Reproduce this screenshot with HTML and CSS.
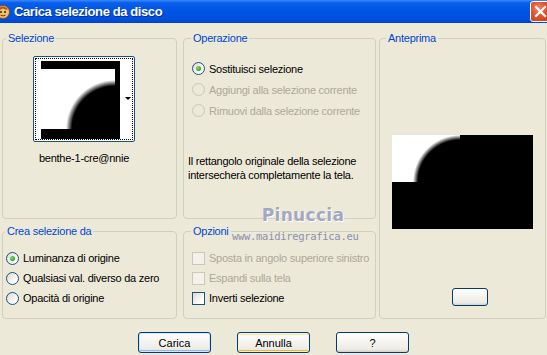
FILE: index.html
```html
<!DOCTYPE html>
<html>
<head>
	<meta charset="utf-8">
	<title>Carica selezione da disco</title>
	<link rel="stylesheet" href="styles.css">
</head>
<body>
	<div class="window">
		<div class="titlebar">
			<svg class="app-icon" width="16" height="16" viewBox="0 0 16 16">
				<circle cx="8" cy="8" r="6.5" fill="#f3c36a" stroke="#8a4b14" stroke-width="1"/>
				<path d="M3 5 Q8 0 13 5 L11 6 Q8 3 5 6 Z" fill="#b5561c"/>
				<circle cx="6" cy="8" r="1" fill="#3a2410"/>
				<circle cx="10" cy="8" r="1" fill="#3a2410"/>
				<path d="M5.5 11 Q8 13 10.5 11" stroke="#7a2c0c" stroke-width="1" fill="none"/>
			</svg>
			<span class="title">Carica selezione da disco</span>
			<span class="close">
				<svg width="21" height="21" viewBox="0 0 21 21">
					<path d="M6 6 L15 15 M15 6 L6 15" stroke="#fff" stroke-width="2.2" stroke-linecap="square"/>
				</svg>
			</span>
		</div>

		<div class="client">
			<div class="panels">
				<div class="col col-left">
					<fieldset class="group g-sel">
						<legend>Selezione</legend>
						<div class="group-body">
							<div class="thumb">
								<div class="thumb-focus">
									<div class="thumb-img">
										<div class="thumb-white"></div>
									</div>
									<div class="thumb-strip"><span class="arrow"></span></div>
								</div>
							</div>
							<div class="thumb-name">benthe-1-cre@nnie</div>
						</div>
					</fieldset>

					<fieldset class="group g-crea">
						<legend>Crea selezione da</legend>
						<div class="group-body">
							<div class="opt"><span class="radio checked"></span>Luminanza di origine</div>
							<div class="opt"><span class="radio"></span>Qualsiasi val. diverso da zero</div>
							<div class="opt"><span class="radio"></span>Opacità di origine</div>
						</div>
					</fieldset>
				</div>

				<div class="col col-mid">
					<fieldset class="group g-op">
						<legend>Operazione</legend>
						<div class="group-body">
							<div class="opt"><span class="radio checked"></span>Sostituisci selezione</div>
							<div class="opt disabled"><span class="radio"></span>Aggiungi alla selezione corrente</div>
							<div class="opt disabled"><span class="radio"></span>Rimuovi dalla selezione corrente</div>
							<p class="note">Il rettangolo originale della selezione intersecherà completamente la tela.</p>
						</div>
					</fieldset>

					<fieldset class="group g-opz">
						<legend>Opzioni</legend>
						<div class="group-body">
							<div class="opt disabled"><span class="check"></span>Sposta in angolo superiore sinistro</div>
							<div class="opt disabled"><span class="check"></span>Espandi sulla tela</div>
							<div class="opt"><span class="check"></span>Inverti selezione</div>
						</div>
					</fieldset>
				</div>

				<fieldset class="group g-ant">
					<legend>Anteprima</legend>
					<div class="group-body">
						<div class="preview">
							<div class="preview-white"></div>
						</div>
						<button class="btn btn-small" type="button"></button>
					</div>
				</fieldset>
			</div>

			<div class="actions">
				<button class="btn btn-focus" type="button">Carica</button>
				<button class="btn btn-default" type="button">Annulla</button>
				<button class="btn" type="button">?</button>
			</div>
		</div>

		<div class="watermark">
			<div class="wm-name">Pinuccia</div>
			<div class="wm-url">www.maidiregrafica.eu</div>
		</div>
	</div>
</body>
</html>
```

FILE: styles.css
```css
*{
	padding: 0;
	margin: 0;
	box-sizing: border-box;
}
body{
	width: 547px;
	height: 355px;
	overflow: hidden;
	background: #ECE9D8;
	font-family: "Liberation Sans", Arial, sans-serif;
	font-size: 11px;
	letter-spacing: -0.25px;
	color: #000;
}
.window{
	position: relative;
	width: 547px;
	height: 355px;
	overflow: hidden;
}

/* barra del titolo */
.titlebar{
	height: 23px;
	display: flex;
	align-items: center;
	overflow: hidden;
	background: linear-gradient(#3A8CFF 0%, #0A5EEA 12%, #0055E5 45%, #0050DE 80%, #0044CC 100%);
}
.app-icon{
	margin-left: -5px;
	margin-right: 3px;
	flex: none;
}
.title{
	color: #fff;
	font-weight: bold;
	font-size: 13px;
	letter-spacing: -0.4px;
	text-shadow: 1px 1px 0 #0A2F8C;
}
.close{
	margin-left: auto;
	margin-right: -4px;
	width: 21px;
	height: 21px;
	border: 1px solid #fff;
	border-radius: 3px;
	background: radial-gradient(circle at 40% 35%, #F08A6A 0%, #E0532E 45%, #C53B14 100%);
	display: flex;
	flex: none;
}
.close svg{
	margin: -1px;
}

/* area client */
.client{
	padding: 9px 0 0 2px;
}
.panels{
	display: flex;
	align-items: flex-start;
}
.col{
	display: flex;
	flex-direction: column;
	gap: 6px;
}
.col-left{
	width: 175px;
	margin-right: 6px;
}
.col-mid{
	width: 193px;
	margin-right: 3px;
}

.group{
	border: 1px solid #D0D0BF;
	border-radius: 4px;
	min-width: 0;
}
.group legend{
	color: #0046D5;
	line-height: 13px;
	margin-left: 3px;
	padding: 0 2px;
}
.g-crea legend{
	margin-left: 2px;
}
.g-op legend, .g-opz legend{
	margin-left: 7px;
}
.g-ant legend{
	margin-left: 6px;
}
.g-sel, .g-op{
	height: 187px;
}
.g-crea, .g-opz{
	height: 94px;
}
.g-ant{
	width: 167px;
	height: 287px;
}

/* miniatura */
.g-sel .group-body{
	padding-left: 30px;
}
.thumb{
	margin-top: 11px;
	width: 102px;
	height: 86px;
	border: 1px solid #1C5180;
	border-radius: 2px;
	background: #fff;
	padding: 1px;
}
.thumb-focus{
	height: 100%;
	border: 1px dotted #000;
	display: flex;
	padding: 2px 0 1px 5px;
	background: #fff;
}
.thumb-img{
	width: 79px;
	height: 78px;
	background: #000;
	padding: 8px 0 0 0;
}
.thumb-white{
	width: 74px;
	height: 60px;
	background: radial-gradient(circle at 100% 100%, #000 43px, #fff 49px);
}
.thumb-strip{
	flex: 1;
	position: relative;
}
.arrow{
	position: absolute;
	right: 1px;
	top: 36px;
	border-left: 3px solid transparent;
	border-right: 3px solid transparent;
	border-top: 3px solid #000;
}
.thumb-name{
	width: 102px;
	text-align: center;
	margin-top: 10px;
	line-height: 13px;
}

/* opzioni */
.opt{
	display: flex;
	align-items: center;
	height: 21px;
	white-space: nowrap;
}
.opt.disabled{
	color: #ACA899;
}
.g-op .group-body{
	padding: 13px 0 0 8px;
}
.g-crea .group-body{
	padding: 10px 0 0 3px;
}
.g-crea .opt, .g-opz .opt{
	height: 20px;
}
.g-opz .group-body{
	padding: 10px 0 0 8px;
}
.radio{
	width: 13px;
	height: 13px;
	border-radius: 50%;
	border: 1px solid #1C5180;
	background: linear-gradient(135deg, #DCD9CC, #FFFFFF 75%);
	margin-right: 4px;
	flex: none;
	display: flex;
	align-items: center;
	justify-content: center;
}
.radio.checked::after{
	content: "";
	width: 5px;
	height: 5px;
	border-radius: 50%;
	background: radial-gradient(circle at 35% 35%, #7CDA6B, #21A121 80%);
}
.disabled .radio{
	border-color: #CAC8BB;
	background: #ECE9D8;
}
.check{
	width: 13px;
	height: 13px;
	border: 1px solid #1C5180;
	background: linear-gradient(135deg, #DCD9CC, #FFFFFF 75%);
	margin-right: 4px;
	flex: none;
}
.disabled .check{
	border-color: #CAC8BB;
	background: #F3F1E8;
}
.note{
	margin-top: 33px;
	margin-left: -4px;
	line-height: 14px;
	padding-right: 6px;
}

/* anteprima */
.g-ant .group-body{
	padding-left: 12px;
}
.preview{
	margin-top: 90px;
	width: 141px;
	height: 94px;
	background: #000;
}
.preview-white{
	width: 68px;
	height: 47px;
	background: radial-gradient(circle at 100% 100%, #000 42px, #fff 47px);
}

/* pulsanti */
.btn{
	width: 73px;
	height: 21px;
	border: 1px solid #003C74;
	border-radius: 3px;
	background: linear-gradient(#FFFFFF, #F4F3EE 50%, #ECEBE6 85%, #D6D0C5);
	font-family: "Liberation Sans", Arial, sans-serif;
	font-size: 11px;
	color: #000;
}
.btn-small{
	display: block;
	width: 36px;
	height: 18px;
	margin: 59px 0 0 60px;
}
.btn-focus{
	box-shadow: inset 0 0 0 1px #CEE7FF, inset 0 -2px 0 #98B8EA;
}
.btn-default{
	box-shadow: inset 0 0 0 1px #FFF0CF, inset 0 -2px 0 #F8B330, inset 0 2px 0 #FFE7A2;
}
.actions{
	display: flex;
	justify-content: center;
	gap: 26px;
	margin-top: 13px;
	padding-right: 2px;
}

/* firma sopra il contenuto */
.watermark{
	position: absolute;
	left: 232px;
	top: 205px;
	width: 122px;
	text-align: center;
	color: #A3A8C0;
}
.wm-name{
	font-family: "DejaVu Sans", sans-serif;
	font-weight: bold;
	font-size: 17px;
	line-height: 21px;
	letter-spacing: 0.3px;
	margin-left: 20px;
	text-shadow: 0 0 1px #fff, 1px 1px 0 #fff;
}
.wm-url{
	font-family: "DejaVu Sans Mono", monospace;
	font-size: 10.5px;
	letter-spacing: -0.3px;
	line-height: 12px;
	margin-top: 4px;
	color: #8B90AA;
}
```
